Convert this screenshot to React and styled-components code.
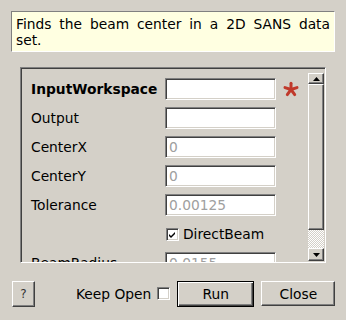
import React from "react";
import styled, { createGlobalStyle, css } from "styled-components";

const GlobalStyle = createGlobalStyle`
  html, body {
    margin: 0;
    padding: 0;
    background: #d4d0c8;
  }
  body {
    font-family: "DejaVu Sans", "Liberation Sans", sans-serif;
    font-size: 13.8px;
    color: #000;
  }
`;

const sunken = css`
  border: 1px solid;
  border-color: #808080 #ffffff #ffffff #808080;
  box-shadow: inset 1px 1px 0 #404040, inset -1px -1px 0 #d4d0c8;
`;

const raised = css`
  border: 1px solid;
  border-color: #ffffff #404040 #404040 #ffffff;
  box-shadow: inset -1px -1px 0 #808080, inset 1px 1px 0 #d4d0c8;
`;

const Dialog = styled.div`
  width: 346px;
  height: 320px;
  box-sizing: border-box;
  padding-top: 11px;
  display: flex;
  flex-direction: column;
`;

const Description = styled.div`
  margin-left: 11px;
  width: 324px;
  height: 41px;
  box-sizing: border-box;
  padding: 4px 4px 0 4px;
  background: #ffffe1;
  border: 1px solid;
  border-color: #808080 #ffffff #ffffff #808080;
  text-align: justify;
  line-height: 16px;
`;

const ScrollFrame = styled.div`
  margin: 15px 0 0 20px;
  width: 306px;
  height: 196px;
  box-sizing: border-box;
  display: flex;
  ${sunken};
  box-shadow: inset 1px 1px 0 #404040;
  padding: 1px 1px 0 1px;
`;

const Viewport = styled.div`
  flex: 1;
  overflow: hidden;
  padding: 9px 0 0 9px;
  display: flex;
  flex-direction: column;
  gap: 7px;
`;

const Row = styled.div`
  display: flex;
  align-items: center;
  height: 22px;
  flex-shrink: 0;
`;

const Label = styled.div`
  width: 134px;
  font-weight: ${(p) => (p.$bold ? "bold" : "normal")};
  white-space: nowrap;
`;

const Field = styled.div`
  width: 111px;
  height: 22px;
  box-sizing: border-box;
  background: #fff;
  ${sunken};
  padding: 0 3px;
  display: flex;
  align-items: center;
  color: #a0a0a0;
`;

const Star = styled.svg`
  margin-left: 7px;
  width: 16px;
  height: 16px;
`;

const Check = styled.div`
  width: 13px;
  height: 13px;
  box-sizing: border-box;
  background: #fff;
  ${sunken};
  display: flex;
  align-items: center;
  justify-content: center;
`;

const CheckRow = styled(Row)`
  padding-left: 135px;
  gap: 4px;
`;

const ScrollBar = styled.div`
  width: 16px;
  display: flex;
  flex-direction: column;
  padding-top: 4px;
  padding-bottom: 1px;
`;

const ArrowButton = styled.div`
  height: ${(p) => p.$h}px;
  box-sizing: border-box;
  background: #d4d0c8;
  ${raised};
  display: flex;
  align-items: center;
  justify-content: center;
  flex-shrink: 0;
`;

const Thumb = styled.div`
  height: 146px;
  box-sizing: border-box;
  background: #d4d0c8;
  ${raised};
`;

const Trough = styled.div`
  flex: 1;
  background-color: #ffffff;
  background-image: repeating-conic-gradient(#d4d0c8 0 25%, #ffffff 0 50%);
  background-size: 2px 2px;
`;

const Footer = styled.div`
  margin: 17px 0 0 12px;
  display: flex;
  align-items: center;
  height: 27px;
`;

const Button = styled.div`
  box-sizing: border-box;
  width: ${(p) => p.$w}px;
  height: ${(p) => p.$h || 26}px;
  background: #d4d0c8;
  display: flex;
  align-items: center;
  justify-content: center;
  ${raised};
  ${(p) =>
    p.$default &&
    css`
      border: 1px solid #000;
      box-shadow: inset 1px 1px 0 #ffffff, inset -1px -1px 0 #404040,
        inset -2px -2px 0 #808080;
    `}
`;

const HelpButton = styled(Button)`
  font-size: 12px;
  color: #333;
`;

const KeepOpen = styled.div`
  margin-left: 41px;
  display: flex;
  align-items: center;
  gap: 6px;
`;

const RunButton = styled(Button)`
  margin-left: 7px;
`;

const CloseButton = styled(Button)`
  margin-left: 7px;
`;

function Asterisk() {
  const angles = [-90, -18, 54, 126, 198];
  return (
    <Star viewBox="0 0 16 16">
      {angles.map((a) => {
        const r = (a * Math.PI) / 180;
        return (
          <line
            key={a}
            x1="8"
            y1="8.5"
            x2={8 + Math.cos(r) * 6.3}
            y2={8.5 + Math.sin(r) * 6.3}
            stroke="#c0392b"
            strokeWidth="3"
            strokeLinecap="round"
          />
        );
      })}
    </Star>
  );
}

function Tick() {
  return (
    <svg width="9" height="9" viewBox="0 0 9 9">
      <path d="M1 4 L3 6 L7 2 L7 4 L3 8 L1 6 Z" fill="#000" />
    </svg>
  );
}

function Arrow({ down }) {
  return (
    <svg width="7" height="4" viewBox="0 0 7 4">
      <path d={down ? "M0 0 H7 L3.5 4 Z" : "M0 4 H7 L3.5 0 Z"} fill="#000" />
    </svg>
  );
}

const rows = [
  { label: "InputWorkspace", bold: true, value: "", required: true },
  { label: "Output", value: "" },
  { label: "CenterX", value: "0" },
  { label: "CenterY", value: "0" },
  { label: "Tolerance", value: "0.00125" },
];

export default function App() {
  return (
    <>
      <GlobalStyle />
      <Dialog>
        <Description>Finds the beam center in a 2D SANS data set.</Description>
        <ScrollFrame>
          <Viewport>
            {rows.map((r) => (
              <Row key={r.label}>
                <Label $bold={r.bold}>{r.label}</Label>
                <Field>{r.value}</Field>
                {r.required && <Asterisk />}
              </Row>
            ))}
            <CheckRow>
              <Check>
                <Tick />
              </Check>
              <span>DirectBeam</span>
            </CheckRow>
            <Row>
              <Label>BeamRadius</Label>
              <Field>0.0155</Field>
            </Row>
          </Viewport>
          <ScrollBar>
            <ArrowButton $h={11}>
              <Arrow />
            </ArrowButton>
            <Thumb />
            <Trough />
            <ArrowButton $h={13}>
              <Arrow down />
            </ArrowButton>
          </ScrollBar>
        </ScrollFrame>
        <Footer>
          <HelpButton $w={23}>?</HelpButton>
          <KeepOpen>
            <span>Keep Open</span>
            <Check />
          </KeepOpen>
          <RunButton $w={77} $default>
            Run
          </RunButton>
          <CloseButton $w={74} $h={25}>
            Close
          </CloseButton>
        </Footer>
      </Dialog>
    </>
  );
}
